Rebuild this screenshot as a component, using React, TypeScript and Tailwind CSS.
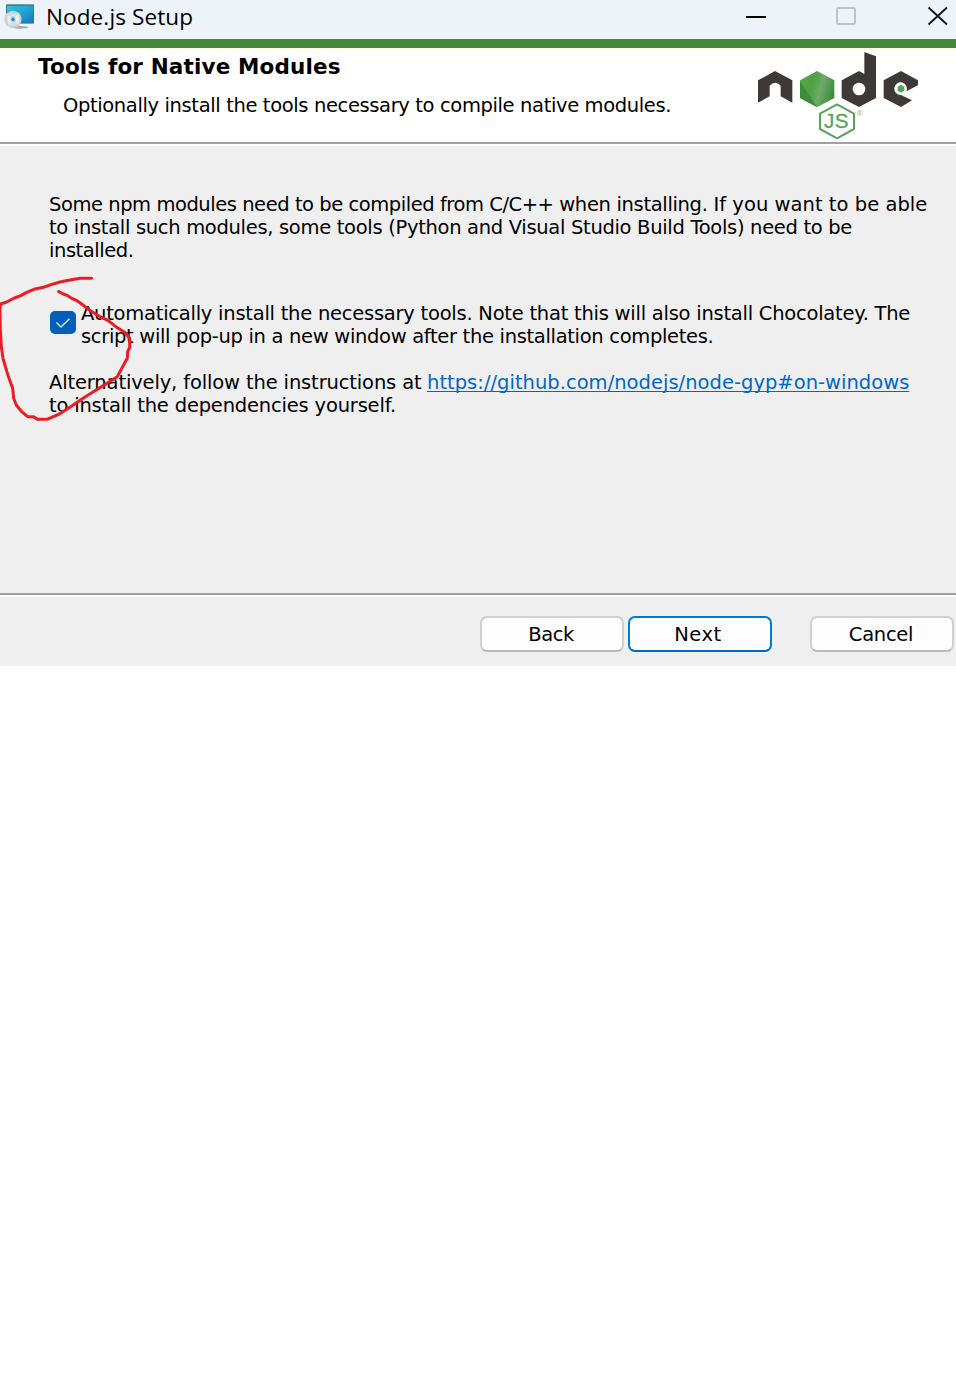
import React from "react";

function InstallerIcon() {
  return (
    <svg className="-mt-1.5 h-[26px] w-[30px] shrink-0" viewBox="0 0 90 78">
      <defs>
        <linearGradient id="screen" x1="0" y1="0" x2="1" y2="1">
          <stop offset="0" stopColor="#2cc3dc" />
          <stop offset="0.5" stopColor="#22a5d3" />
          <stop offset="1" stopColor="#1674bd" />
        </linearGradient>
        <radialGradient id="disc">
          <stop offset="0" stopColor="#3d9ad6" />
          <stop offset="0.25" stopColor="#8cc7ea" />
          <stop offset="0.42" stopColor="#dfe6ea" />
          <stop offset="1" stopColor="#c6cbcf" />
        </radialGradient>
      </defs>
      <ellipse cx="49" cy="70" rx="25" ry="4" fill="#a3abb1" />
      <rect x="6" y="1" width="84" height="58" fill="#4a7584" />
      <rect x="9" y="6" width="78" height="50" fill="url(#screen)" />
      <circle cx="27" cy="46" r="26" fill="url(#disc)" />
      <path d="M9 28L26 45L15 69Z M45 28L28 45L45 63Z" fill="#fff" opacity="0.45" />
      <circle cx="27" cy="46" r="5" fill="#3186c4" />
    </svg>
  );
}

function NodeLogo() {
  return (
    <svg className="h-[88px] w-40 shrink-0" viewBox="54 36 480 264">
      <defs>
        <linearGradient id="leaf" x1="0" y1="0.3" x2="1" y2="0.6">
          <stop offset="0" stopColor="#55aa3f" />
          <stop offset="0.35" stopColor="#4fa044" />
          <stop offset="0.6" stopColor="#6eab66" />
          <stop offset="1" stopColor="#3c8a3c" />
        </linearGradient>
      </defs>
      <path d="M54 188V121L105 93L157 121V188L122 169V137Q106 120 89 137V169Z" fill="#3e3936" />
      <path d="M231 93L283 121V174L231 202L180 174V121Z" fill="url(#leaf)" />
      <path d="M180 124L231 201L180 174Z" fill="#3d8b3d" />
      <path fillRule="evenodd" d="M373 36L408 49V174L357 201L305 174V121L357 93L373 102ZM357 128A19 19 0 1 0 357 166A19 19 0 1 0 357 128Z" fill="#3e3936" />
      <path d="M483 93L534 121V136L499 154A19 19 0 1 0 483 165L516 181L483 201L431 174V121Z" fill="#3e3936" />
      <path d="M483 134L493 140V152L483 158L473 152V140Z" fill="#57a45f" />
      <path d="M291 193L342 221V267L291 295L240 267V221Z" fill="#fff" stroke="#5aa55b" strokeWidth="6" strokeLinejoin="round" />
      <text fill="#5aa55b" stroke="#5aa55b" fontFamily="Liberation Sans" fontSize="62" x="252" y="265">
        J<tspan x="284">S</tspan>
      </text>
      <text x="350" y="227" fill="#7ab77c" fontFamily="Liberation Sans" fontSize="24">®</text>
    </svg>
  );
}

function Button({ label, primary, tracking }: { label: string; primary?: boolean; tracking: string }) {
  return (
    <button
      className={
        "flex h-9 w-36 items-center justify-center rounded-[7px] border-2 bg-[#fdfdfd] pt-0.5 text-[19.5px] leading-none " +
        (primary ? "border-[#0078d4] border-b-[#0067c0] pr-1 " : "border-[#d0d0d0] border-b-[#bababa] pr-0.5 ") +
        tracking
      }
    >
      {label}
    </button>
  );
}

function RedInk() {
  return (
    <svg className="pointer-events-none absolute left-0 top-[270px] h-40 w-40" viewBox="0 0 480 480" fill="none" stroke="#ed1c24" strokeWidth="9" strokeLinecap="round" strokeLinejoin="round">
      <path d="M275 25H240L210 30L180 36L155 43L130 52L102 58L80 67L62 77L43 84L20 96L2 102L0 112L1 180L4 230L9 265L17 293L27 325L38 355L41 385L49 405L64 424L83 440H101L112 448H141L178 432L214 409L255 381L309 347L352 320L368 290L382 265L383 245L389 232V205L374 187L350 172L325 152L293 136L268 120L245 102L231 92L217 86L203 77L190 72L176 65" />
    </svg>
  );
}

const line = "block w-max whitespace-nowrap ";

export default function App() {
  return (
    <div className="relative min-h-[1382px] w-[956px] overflow-hidden bg-white font-['DejaVu_Sans',sans-serif] text-black">
      <div className="flex h-[39px] items-center bg-[#eef3f9] pl-1">
        <InstallerIcon />
        <span className="-mt-1 ml-3 font-['Open_Sans',sans-serif] text-[22.5px] leading-none tracking-[0.12px]">Node.js Setup</span>
        <svg className="ml-auto h-[39px] w-[210px]" viewBox="0 0 210 39" fill="none">
          <path d="M0 17H20" stroke="#000" strokeWidth="2" />
          <rect x="91" y="8" width="18" height="16" rx="1" stroke="#bfc3c8" strokeWidth="2" />
          <path d="M182.500 7.500L201 24.500M201 7.500L182.500 24.500" stroke="#161a1e" strokeWidth="2" />
        </svg>
      </div>
      <div className="h-[9px] bg-[#43883c]" />
      <header className="flex h-24 justify-between border-b-2 border-t-2 border-b-[#a0a0a0] border-t-[#fcffe4] pl-[38px] pr-[38px]">
        <div className="pt-[5px]">
          <h1 className={line + "text-[21.5px] font-bold leading-6 tracking-[0.15px]"}>Tools for Native Modules</h1>
          <p className={line + "ml-[25px] mt-[15px] text-[19.5px] leading-6 tracking-[-0.37px]"}>Optionally install the tools necessary to compile native modules.</p>
        </div>
        <div className="pt-0.5">
          <NodeLogo />
        </div>
      </header>
      <main className="h-[451px] border-b-2 border-t-2 border-b-[#a0a0a0] border-t-white bg-[#efefef] pl-[49px] pt-[47px] text-[19.5px] leading-[23px]">
        <p>
          <span className={line + "tracking-[-0.45px]"}>
            Some npm modules need to be compiled from C/C++ <span className="tracking-[-0.33px]">when installing. </span>
            <span className="tracking-[0.04px]">If you want to be able</span>
          </span>
          <span className={line + "tracking-[-0.31px]"}>to install such modules, some tools (Python and Visual Studio Build Tools) need to be</span>
          <span className={line + "tracking-[-0.45px]"}>installed.</span>
        </p>
        <label className="mt-10 flex">
          <span className="ml-px mr-[5px] mt-[9px] flex h-[23px] w-[26px] shrink-0 items-center justify-center rounded-[5px] bg-[#005fb8]">
            <svg className="h-[10px] w-[14px]" viewBox="0 0 14 10" fill="none" stroke="#d7e8f7" strokeWidth="1.400">
              <path d="M0.500 4.500L5 9L13.500 0.800" />
            </svg>
          </span>
          <span>
            <span className={line + "tracking-[-0.245px]"}>Automatically install the necessary tools. Note that this will also install Chocolatey. The</span>
            <span className={line + "tracking-[-0.32px]"}>script will pop-up in a new window after the installation completes.</span>
          </span>
        </label>
        <p className="mt-[23px]">
          <span className="flex">
            <span className={line + "tracking-[-0.14px]"}>Alternatively, follow the instructions at</span>
            <a className={line + "ml-[5.5px] tracking-[0.02px] text-[#0066cc] underline decoration-1 underline-offset-2 [text-decoration-skip-ink:none]"}>https://github.com/nodejs/node-gyp#on-windows</a>
          </span>
          <span className={line + "tracking-[-0.19px]"}>to install the dependencies yourself.</span>
        </p>
      </main>
      <footer className="flex h-[71px] gap-1 border-t-2 border-white bg-[#efefef] pl-[480px] pt-[19px]">
        <Button label="Back" tracking="tracking-[-0.5px]" />
        <Button label="Next" tracking="tracking-[0.5px]" primary />
        <div className="ml-[34px]">
          <Button label="Cancel" tracking="tracking-[-0.3px]" />
        </div>
      </footer>
      <RedInk />
    </div>
  );
}
